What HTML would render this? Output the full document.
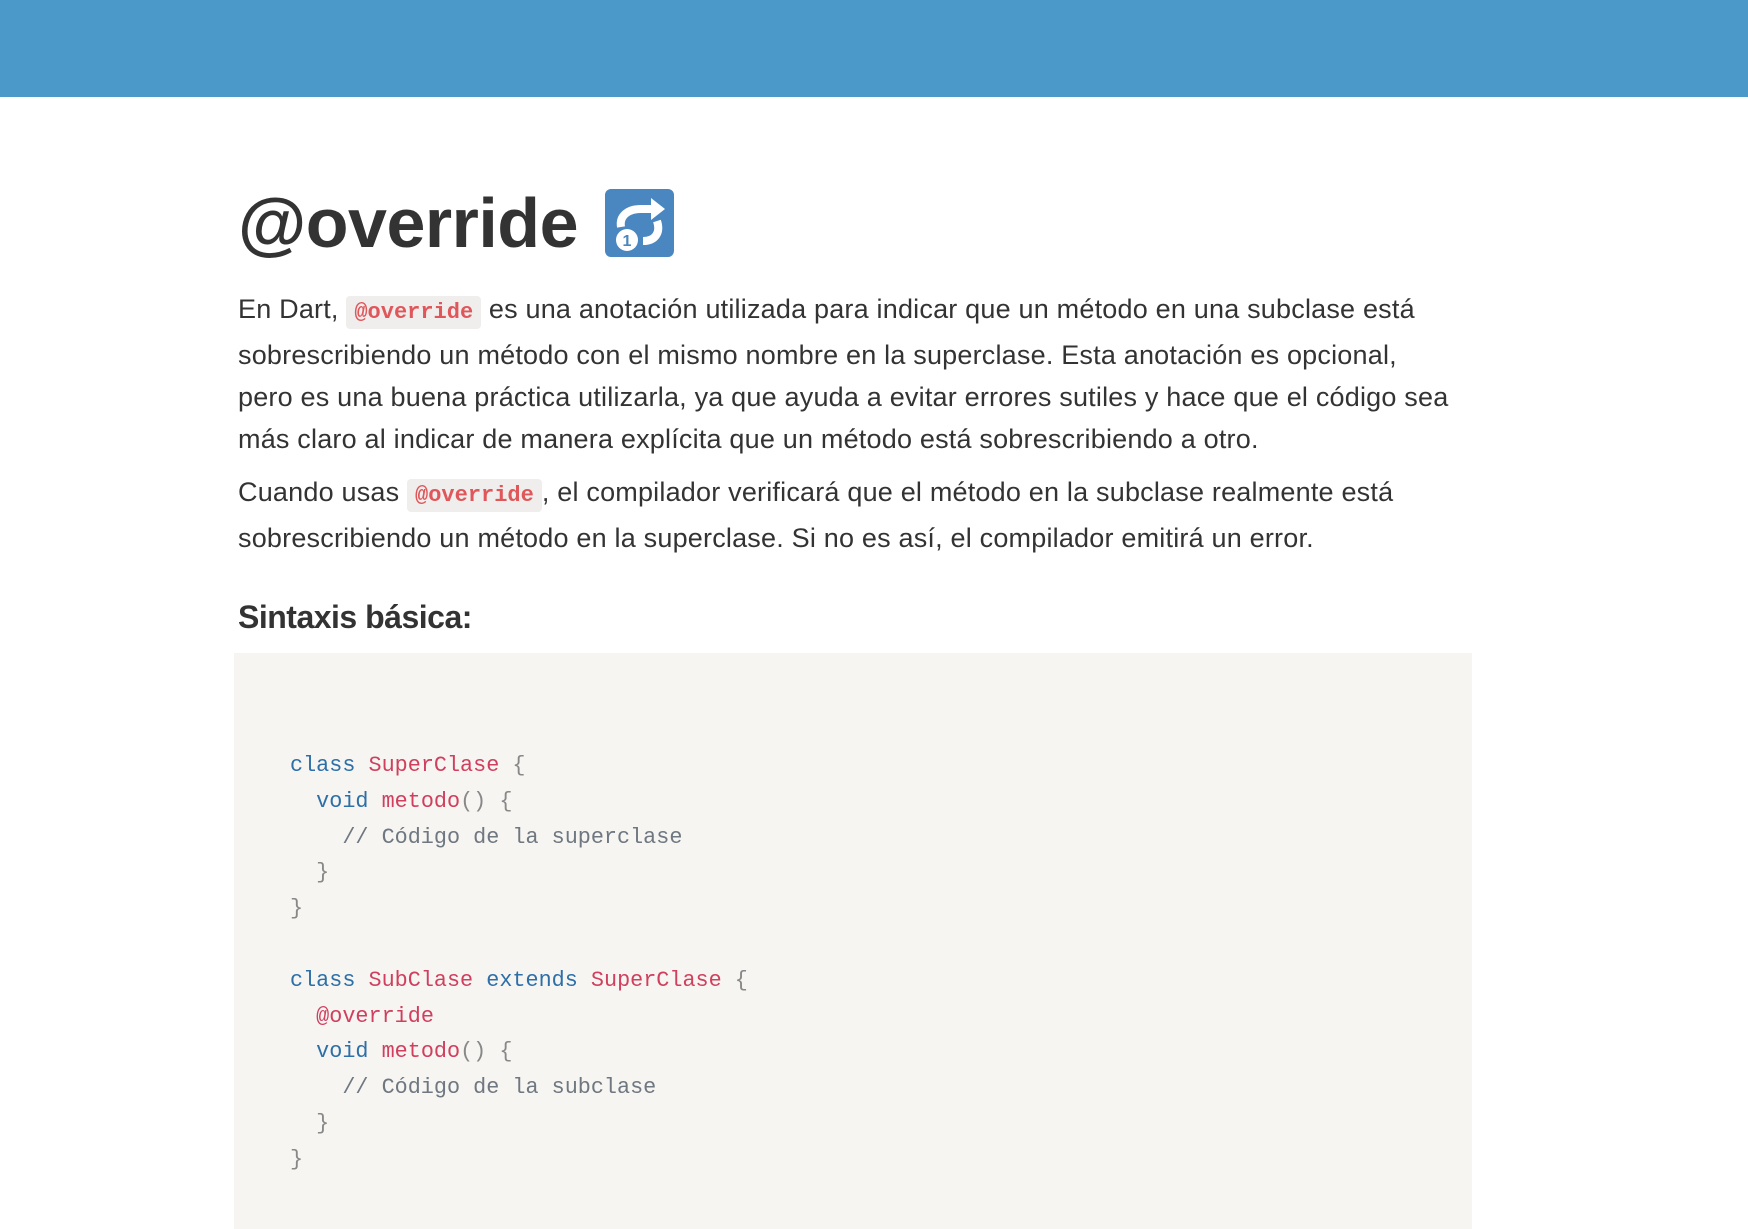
<!DOCTYPE html>
<html><head><meta charset="utf-8"><style>
*{margin:0;padding:0;box-sizing:border-box}
html,body{width:1748px;height:1229px;overflow:hidden;background:#fff}
body{font-family:"Liberation Sans",sans-serif;color:#333;position:relative}
.hdr{position:absolute;left:0;top:0;width:1748px;height:97px;background:#4a99c9}
h1{position:absolute;left:238px;top:178px;font-size:70px;font-weight:bold;color:#333;line-height:90px;letter-spacing:-0.5px;white-space:nowrap}
.icon{position:absolute;left:605px;top:189px;width:69px;height:68px;background:#4a86c0;border-radius:6px}
p{position:absolute;left:238px;font-size:27px;line-height:42px;white-space:nowrap;color:#333;letter-spacing:0.2px}
code.i{font-family:"Liberation Mono",monospace;font-weight:bold;color:#e0575b;background:#efeeec;border-radius:4px;padding:4px 8px;font-size:22px;letter-spacing:0}
h2{position:absolute;left:238px;top:599px;font-size:32px;font-weight:bold;color:#333;white-space:nowrap;letter-spacing:-0.5px}
.code{position:absolute;left:234px;top:653px;width:1238px;height:600px;background:#f6f5f2}
pre{position:absolute;left:290px;top:748px;font-family:"Liberation Mono",monospace;font-size:21.8px;line-height:35.8px;color:#888}
.k{color:#2e6fa8}.n{color:#d0405e}.c{color:#6f7780}
</style></head><body>
<div class="hdr"></div>
<h1>@override</h1>
<div class="icon"><svg width="69" height="68" viewBox="0 0 69 68">
<path d="M16 38 C14 26 24 20 36 20 L48 20" stroke="#fff" stroke-width="8" fill="none"/>
<path d="M46 9 L60 20 L46 31 Z" fill="#fff"/>
<path d="M52 32 C56 44 50 52 38 52" stroke="#fff" stroke-width="8" fill="none"/>
<circle cx="22" cy="51" r="11" fill="#fff"/>
<text x="22" y="57" font-family="Liberation Sans" font-weight="bold" font-size="16" fill="#4a86c0" text-anchor="middle">1</text>
</svg></div>
<p style="top:288px">En Dart, <code class="i">@override</code> es una anotación utilizada para indicar que un método en una subclase está<br>sobrescribiendo un método con el mismo nombre en la superclase. Esta anotación es opcional,<br>pero es una buena práctica utilizarla, ya que ayuda a evitar errores sutiles y hace que el código sea<br>más claro al indicar de manera explícita que un método está sobrescribiendo a otro.</p>
<p style="top:471px">Cuando usas <code class="i">@override</code>, el compilador verificará que el método en la subclase realmente está<br>sobrescribiendo un método en la superclase. Si no es así, el compilador emitirá un error.</p>
<h2>Sintaxis básica:</h2>
<div class="code"></div>
<pre><span class="k">class</span> <span class="n">SuperClase</span> {
  <span class="k">void</span> <span class="n">metodo</span>() {
    <span class="c">// Código de la superclase</span>
  }
}

<span class="k">class</span> <span class="n">SubClase</span> <span class="k">extends</span> <span class="n">SuperClase</span> {
  <span class="n">@override</span>
  <span class="k">void</span> <span class="n">metodo</span>() {
    <span class="c">// Código de la subclase</span>
  }
}</pre>
</body></html>
